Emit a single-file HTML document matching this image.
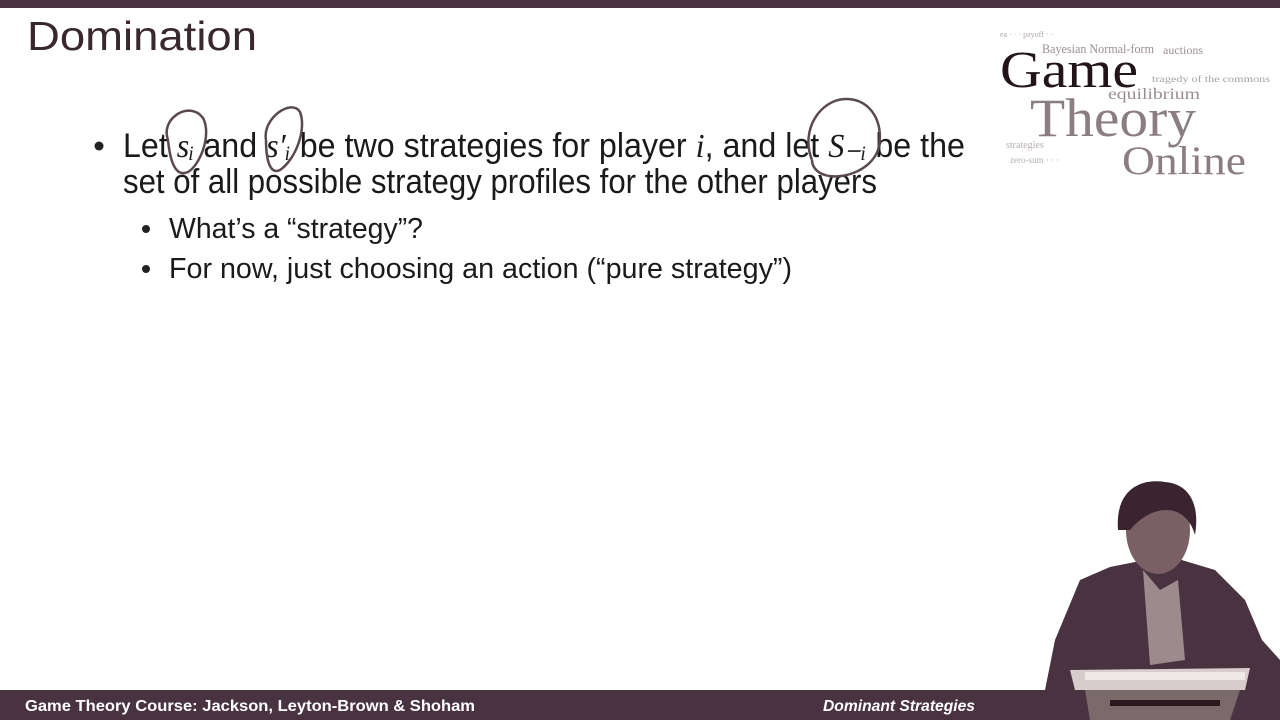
<!DOCTYPE html>
<html><head><meta charset="utf-8"><style>
html,body{margin:0;padding:0;background:#fff;width:1280px;height:720px;overflow:hidden}
svg{display:block}
.s{font-family:"Liberation Sans",sans-serif}
.m{font-family:"Liberation Serif",serif;font-style:italic}
.r{font-family:"Liberation Serif",serif}
</style></head><body>
<svg width="1280" height="720" viewBox="0 0 1280 720">
<rect x="0" y="0" width="1280" height="8" fill="#4a3340"/>
<text class="s" x="27" y="50" font-size="41" fill="#3a2830" textLength="230" lengthAdjust="spacingAndGlyphs">Domination</text>
<g class="r">
<text class="r" x="1000" y="37" font-size="8" fill="#b0a6a8">ea · · · payoff · ·</text>
<text class="r" x="1042" y="53" font-size="13" fill="#9a8e90" textLength="112" lengthAdjust="spacingAndGlyphs">Bayesian Normal-form</text>
<text class="r" x="1163" y="54" font-size="12" fill="#9a8e90">auctions</text>
<text class="r" x="1000" y="87" font-size="52" fill="#231418" textLength="138" lengthAdjust="spacingAndGlyphs">Game</text>
<text class="r" x="1152" y="82" font-size="9" fill="#aaa0a2" textLength="118" lengthAdjust="spacingAndGlyphs">tragedy of the commons</text>
<text class="r" x="1108" y="99" font-size="16" fill="#9a8e90" textLength="92" lengthAdjust="spacingAndGlyphs">equilibrium</text>
<text class="r" x="1030" y="136" font-size="54" fill="#8c7e80" textLength="166" lengthAdjust="spacingAndGlyphs">Theory</text>
<text class="r" x="1122" y="174" font-size="40" fill="#8c7e80" textLength="124" lengthAdjust="spacingAndGlyphs">Online</text>
<text class="r" x="1006" y="148" font-size="10" fill="#b8aeb0">strategies</text>
<text class="r" x="1010" y="163" font-size="9" fill="#b8aeb0">zero-sum · · ·</text>
</g>
<circle cx="99" cy="146" r="4.5" fill="#222"/>
<text class="s" x="123" y="157" font-size="34" fill="#1a1a1a" textLength="842" lengthAdjust="spacingAndGlyphs">Let <tspan class="m">sᵢ</tspan> and <tspan class="m">s′ᵢ</tspan> be two strategies for player <tspan class="m">i</tspan>, and let <tspan class="m">S₋ᵢ</tspan> be the</text>
<text class="s" x="123" y="193" font-size="34" fill="#1a1a1a" textLength="754" lengthAdjust="spacingAndGlyphs">set of all possible strategy profiles for the other players</text>
<circle cx="146" cy="229" r="4" fill="#222"/>
<text class="s" x="169" y="238" font-size="29" fill="#1a1a1a" textLength="254" lengthAdjust="spacingAndGlyphs">What’s a “strategy”?</text>
<circle cx="146" cy="269" r="4" fill="#222"/>
<text class="s" x="169" y="278" font-size="29" fill="#1a1a1a" textLength="623" lengthAdjust="spacingAndGlyphs">For now, just choosing an action (“pure strategy”)</text>
<g fill="none" stroke="#5a4a4e" stroke-width="2.5">
<path d="M168 140 C160 118 190 100 203 118 C212 135 200 165 188 172 C175 178 170 160 168 140"/>
<path d="M266 140 C262 118 292 98 300 112 C307 130 295 160 280 170 C270 175 266 160 266 140"/>
<path d="M812 160 C800 130 820 100 845 99 C872 98 885 125 878 150 C870 172 840 180 825 175 C815 172 812 165 812 160"/>
</g>
<g>
<path d="M1045 690 L1055 640 L1080 580 L1110 567 L1145 560 L1175 558 L1215 570 L1245 600 L1262 640 L1280 660 L1280 690 Z" fill="#4a3340"/>
<path d="M1143 570 L1160 590 L1178 580 L1185 660 L1150 665 Z" fill="#9c8a8c"/>
<ellipse cx="1158" cy="530" rx="32" ry="44" fill="#7a6064"/>
<path d="M1118 530 C1115 490 1140 478 1165 482 C1190 484 1200 505 1195 535 C1185 500 1150 505 1130 530 Z" fill="#3a2430"/>
<path d="M1070 670 L1250 668 L1245 690 L1075 690 Z" fill="#d8cccc"/>
<rect x="1085" y="672" width="160" height="8" fill="#f0e8e8"/>
</g>
<rect x="0" y="690" width="1280" height="30" fill="#4a3340"/>
<text class="s" x="25" y="711" font-size="16" font-weight="bold" fill="#fff" textLength="450" lengthAdjust="spacingAndGlyphs">Game Theory Course: Jackson, Leyton-Brown &amp; Shoham</text>
<text class="s" x="823" y="711" font-size="16" font-weight="bold" font-style="italic" fill="#fff" textLength="152" lengthAdjust="spacingAndGlyphs">Dominant Strategies</text>
<path d="M1085 690 L1090 720 L1230 720 L1240 690 Z" fill="#7a6a6c"/>
<rect x="1110" y="700" width="110" height="6" fill="#2a1a20"/>
</svg>
</body></html>
